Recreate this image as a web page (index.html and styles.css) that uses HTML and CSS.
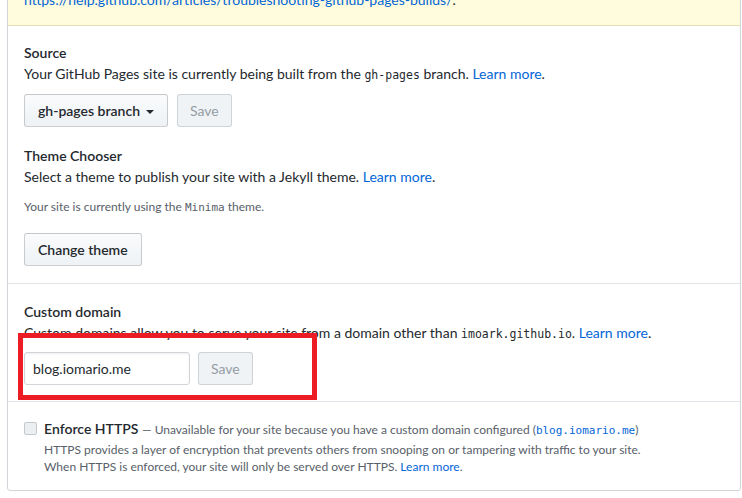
FILE: index.html
```html
<!DOCTYPE html>
<html>
<head>
<meta charset="utf-8">
<link rel="stylesheet" href="styles.css">
</head>
<body>
<div class="page">
  <div class="box">
    <div class="flash">
      <p>Your site is having problems building. For more information, see</p>
      <p><a href="#">https://help.github.com/articles/troubleshooting-github-pages-builds/</a>.</p>
    </div>

    <div class="row row-first">
      <h3 class="title">Source</h3>
      <p class="desc">Your GitHub Pages site is currently being built from the <code>gh-pages</code> branch. <a href="#">Learn more</a>.</p>
      <div class="actions">
        <button class="btn">gh-pages branch <span class="caret"></span></button>
        <button class="btn disabled">Save</button>
      </div>

      <h3 class="title title-2">Theme Chooser</h3>
      <p class="desc">Select a theme to publish your site with a Jekyll theme. <a href="#">Learn more</a>.</p>
      <p class="note">Your site is currently using the <code>Minima</code> theme.</p>
      <div class="actions actions-2">
        <button class="btn">Change theme</button>
      </div>
    </div>

    <div class="row row-domain">
      <h3 class="title">Custom domain</h3>
      <p class="desc">Custom domains allow you to serve your site from a domain other than <code>imoark.github.io</code>. <a href="#">Learn more</a>.</p>
      <div class="actions actions-domain">
        <input class="input" type="text" value="blog.iomario.me">
        <button class="btn disabled">Save</button>
      </div>
      <div class="highlight"></div>
    </div>

    <div class="row row-https">
      <div class="check-line">
        <span class="checkbox"></span>
        <div class="check-body">
          <p class="check-title"><strong>Enforce HTTPS</strong> <span class="muted">— Unavailable for your site because you have a custom domain configured (<code class="blue">blog.iomario.me</code>)</span></p>
          <p class="muted-p">HTTPS provides a layer of encryption that prevents others from snooping on or tampering with traffic to your site.</p>
          <p class="muted-p">When HTTPS is enforced, your site will only be served over HTTPS. <a href="#">Learn more</a>.</p>
        </div>
      </div>
    </div>
  </div>
</div>
</body>
</html>
```

FILE: styles.css
```css
* { box-sizing: border-box; }
html, body { margin: 0; padding: 0; background: #fff; }
body {
  font-family: Lato, "Noto Sans", sans-serif;
  font-size: 14px;
  line-height: 21px;
  color: #24292e;
}
a { color: #0366d6; text-decoration: none; }
p { margin: 0; }
code {
  font-family: "DejaVu Sans Mono", "Liberation Mono", monospace;
  font-size: 11.5px;
}
.page {
  padding-left: 7px;
  padding-right: 1px;
  margin-top: -46px;
}
.box {
  border: 1px solid #d1d5da;
  border-radius: 3px;
  background: #fff;
}
.flash {
  background: #fffbdd;
  border-bottom: 1px solid #e2dfb8;
  padding: 15px 16px;
  line-height: 20px;
}
.row {
  padding: 16px 16px 16px 16px;
  border-bottom: 1px solid #e1e4e8;
}
.row-first { padding-bottom: 17px; }
.row-domain { position: relative; padding-top: 17px; }
.row-https { border-bottom: 0; padding-top: 16px; padding-bottom: 15px; }
.title {
  margin: 0;
  font-size: 14px;
  font-weight: 600;
  line-height: 21px;
}
.title-2 { margin-top: 18px; }
.desc { line-height: 21px; }
.note {
  margin-top: 11px;
  font-size: 12px;
  line-height: 18px;
  color: #586069;
}
.note code { font-size: 11px; }
.actions {
  display: flex;
  gap: 9px;
  margin-top: 8px;
}
.actions-2 { margin-top: 16px; }
.actions-domain { margin-top: 7px; }
.btn {
  font-family: inherit;
  font-size: 14px;
  font-weight: 600;
  line-height: 19px;
  height: 33px;
  padding: 6px 13px;
  color: #24292e;
  background: linear-gradient(#fafbfc, #eff3f6 90%);
  border: 1px solid rgba(27,31,35,0.2);
  border-radius: 3px;
  display: inline-flex;
  align-items: center;
  gap: 6px;
}
.btn.disabled {
  color: #959da5;
  background: #eff3f6;
  border-color: rgba(27,31,35,0.15);
  font-weight: 400;
  padding: 6px 12px;
}
.caret {
  display: inline-block;
  width: 0;
  height: 0;
  border-left: 4px solid transparent;
  border-right: 4px solid transparent;
  border-top: 4px solid #24292e;
  margin-top: 2px;
}
.input {
  width: 166px;
  height: 33px;
  padding: 6px 8px;
  font-family: inherit;
  font-size: 14px;
  color: #24292e;
  border: 1px solid #d1d5da;
  border-radius: 3px;
  box-shadow: inset 0 1px 2px rgba(27,31,35,0.075);
}
.actions .input + .btn { margin-left: -1px; }
.highlight {
  position: absolute;
  left: 10px;
  top: 49px;
  width: 299px;
  height: 67px;
  border: 5px solid #ec1c24;
}
.check-line {
  display: flex;
  gap: 7px;
}
.checkbox {
  flex: none;
  width: 13px;
  height: 13px;
  margin-top: 4px;
  border: 1px solid #c6c9cc;
  border-radius: 2px;
  background: #eceff2;
}
.check-title { line-height: 21px; }
.check-title strong { font-weight: 600; font-size: 14px; }
.muted { font-size: 12px; color: #586069; }
.muted code { font-size: 11px; }
.blue { color: #0366d6; }
.muted-p {
  font-size: 12px;
  line-height: 17px;
  color: #586069;
}
```
